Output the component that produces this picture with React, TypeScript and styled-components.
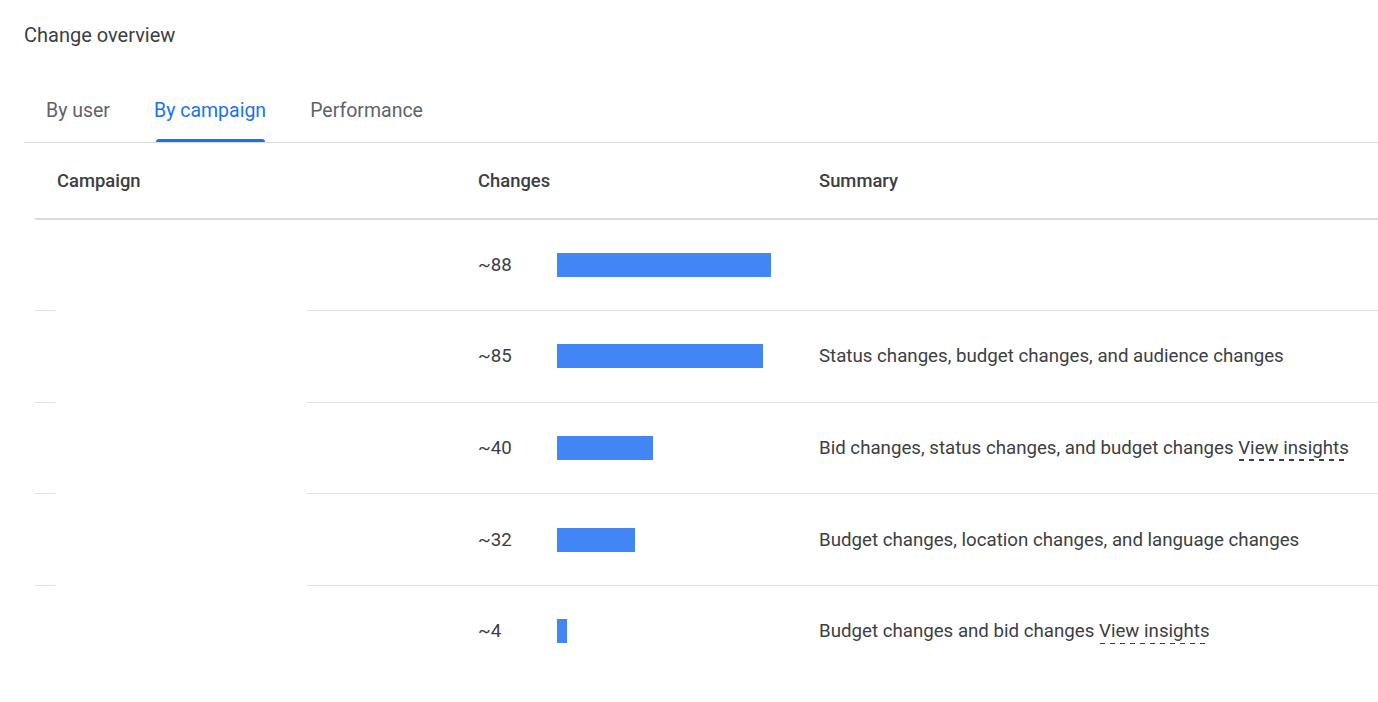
import React from "react";
import styled, { createGlobalStyle } from "styled-components";

const GlobalStyle = createGlobalStyle`
  html, body {
    margin: 0;
    padding: 0;
    background: #ffffff;
  }
  body {
    font-family: Roboto, "Liberation Sans", Arial, sans-serif;
    color: #3c4043;
    overflow: hidden;
  }
`;

const Page = styled.div`
  width: 1378px;
  height: 702px;
  padding-left: 24px;
  box-sizing: border-box;
  overflow: hidden;
`;

const Title = styled.h2`
  margin: 0;
  padding-top: 21px;
  height: 78px;
  box-sizing: border-box;
  font-size: 20px;
  line-height: 28px;
  font-weight: 400;
  color: #3c4043;
`;

const TabBar = styled.div`
  display: flex;
  border-bottom: 1px solid #dadce0;
`;

const Tab = styled.div<{ $active?: boolean }>`
  position: relative;
  height: 64px;
  padding: 0 22px;
  display: flex;
  align-items: center;
  font-size: 19.5px;
  color: ${(p) => (p.$active ? "#1a73e8" : "#5f6368")};
  cursor: pointer;

  &::after {
    content: "";
    display: ${(p) => (p.$active ? "block" : "none")};
    position: absolute;
    left: 24px;
    right: 23px;
    bottom: 0;
    height: 3px;
    border-radius: 3px 3px 0 0;
    background: #1a73e8;
  }
`;

const Table = styled.div`
  margin-left: 11px;
`;

const Row = styled.div<{ $header?: boolean; $last?: boolean }>`
  display: grid;
  grid-template-columns: 421px 341px 1fr;
  height: ${(p) => (p.$header ? "74.5px" : "90.6px")};
  border-bottom: ${(p) =>
    p.$header ? "2px solid #dadce0" : p.$last ? "none" : "1px solid #e0e0e0"};
`;

const HeadCell = styled.div`
  display: flex;
  align-items: center;
  padding-left: 22px;
  font-size: 18.4px;
  font-weight: 500;
  color: #3c4043;
`;

const Cell = styled.div`
  display: flex;
  align-items: center;
  padding-left: 22px;
  font-size: 18.7px;
  color: #3c4043;
`;

const Count = styled.span`
  width: 79px;
  flex: none;
`;

const Bar = styled.div`
  height: 24px;
  background: #4285f4;
`;

const Summary = styled.span`
  white-space: nowrap;
`;

const Insights = styled.a`
  color: #3c4043;
  text-decoration: none;
  padding-bottom: 2px;
  background-image: linear-gradient(to right, #3c4043 55%, transparent 55%);
  background-size: 10px 1.6px;
  background-repeat: repeat-x;
  background-position: 1px bottom;
  cursor: pointer;
`;

const Body = styled.div`
  position: relative;
`;

const Mask = styled.div`
  position: absolute;
  left: 20px;
  top: 0;
  width: 252px;
  bottom: 42px;
  background: #ffffff;
`;

type Item = { count: number; width: number; summary: string; insights?: boolean };

const items: Item[] = [
  { count: 88, width: 214, summary: "" },
  { count: 85, width: 206, summary: "Status changes, budget changes, and audience changes" },
  { count: 40, width: 96, summary: "Bid changes, status changes, and budget changes", insights: true },
  { count: 32, width: 78, summary: "Budget changes, location changes, and language changes" },
  { count: 4, width: 10, summary: "Budget changes and bid changes", insights: true },
];

export default function App() {
  return (
    <>
      <GlobalStyle />
      <Page>
        <Title>Change overview</Title>
        <TabBar>
          <Tab>By user</Tab>
          <Tab $active>By campaign</Tab>
          <Tab>Performance</Tab>
        </TabBar>
        <Table>
          <Row $header>
            <HeadCell>Campaign</HeadCell>
            <HeadCell>Changes</HeadCell>
            <HeadCell>Summary</HeadCell>
          </Row>
          <Body>
            {items.map((it, i) => (
              <Row key={it.count} $last={i === items.length - 1}>
                <Cell />
                <Cell>
                  <Count>~{it.count}</Count>
                  <Bar style={{ width: it.width }} />
                </Cell>
                <Cell>
                  <Summary>
                    {it.summary}
                    {it.insights && (
                      <>
                        {" "}
                        <Insights>View insights</Insights>
                      </>
                    )}
                  </Summary>
                </Cell>
              </Row>
            ))}
            <Mask />
          </Body>
        </Table>
      </Page>
    </>
  );
}
